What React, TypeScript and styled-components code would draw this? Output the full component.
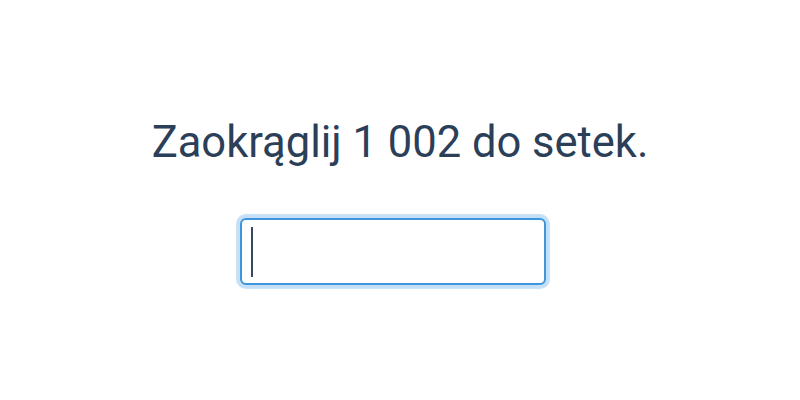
import React from "react";
import styled, { createGlobalStyle } from "styled-components";

const Global = createGlobalStyle`
  html, body {
    margin: 0;
    padding: 0;
    background: #ffffff;
  }
  body {
    font-family: Roboto, "Noto Sans", sans-serif;
  }
`;

const Page = styled.main`
  width: 800px;
  height: 400px;
  display: flex;
  flex-direction: column;
  align-items: center;
  padding-top: 117px;
  box-sizing: border-box;
`;

const Question = styled.p`
  margin: 0;
  font-size: 43.5px;
  line-height: 52px;
  color: #2b4058;
  font-weight: 400;
`;

const AnswerWrap = styled.div`
  position: relative;
  margin-top: 49px;
  margin-right: 15px;
`;

const Answer = styled.input`
  width: 306px;
  height: 67px;
  box-sizing: border-box;
  border: 2px solid #3d95dd;
  border-radius: 6px;
  box-shadow: 0 0 1px 4px #c5e0f6;
  outline: none;
  padding: 0 10px;
  font-family: Roboto, sans-serif;
  font-size: 36px;
  color: #2b4058;
  caret-color: transparent;
  background: #fff;
`;

const Caret = styled.span`
  position: absolute;
  left: 11px;
  top: 9px;
  width: 2px;
  height: 50px;
  background: #3a4a5e;
`;

export default function App() {
  return (
    <>
      <Global />
      <Page>
        <Question>Zaokrąglij 1 002 do setek.</Question>
        <AnswerWrap>
          <Answer type="text" aria-label="odpowiedź" />
          <Caret />
        </AnswerWrap>
      </Page>
    </>
  );
}
